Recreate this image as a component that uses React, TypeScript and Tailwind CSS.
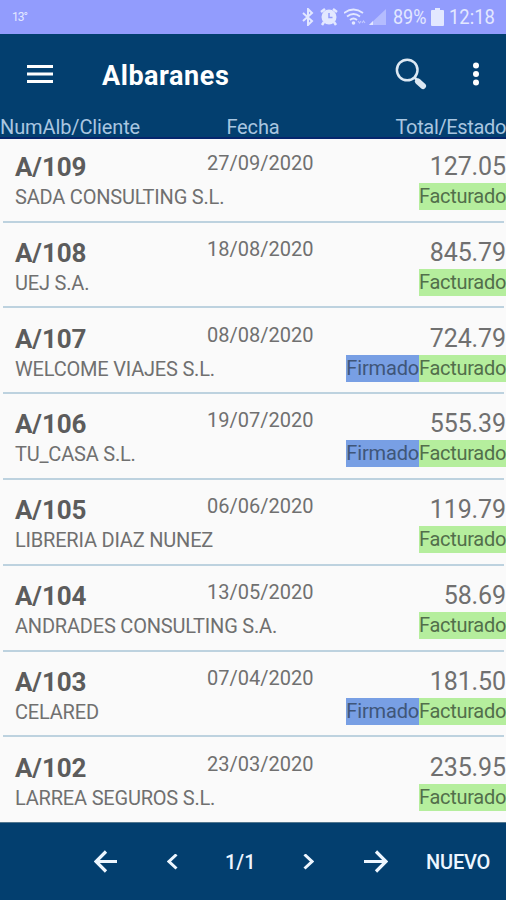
type Row = { num: string; client: string; date: string; total: string; signed?: boolean };

const rows: Row[] = [
  { num: 'A/109', client: 'SADA CONSULTING S.L.', date: '27/09/2020', total: '127.05' },
  { num: 'A/108', client: 'UEJ S.A.', date: '18/08/2020', total: '845.79' },
  { num: 'A/107', client: 'WELCOME VIAJES S.L.', date: '08/08/2020', total: '724.79', signed: true },
  { num: 'A/106', client: 'TU_CASA S.L.', date: '19/07/2020', total: '555.39', signed: true },
  { num: 'A/105', client: 'LIBRERIA DIAZ NUNEZ', date: '06/06/2020', total: '119.79' },
  { num: 'A/104', client: 'ANDRADES CONSULTING S.A.', date: '13/05/2020', total: '58.69' },
  { num: 'A/103', client: 'CELARED', date: '07/04/2020', total: '181.50', signed: true },
  { num: 'A/102', client: 'LARREA SEGUROS S.L.', date: '23/03/2020', total: '235.95' },
];

function StatusBar() {
  return (
    <div className="flex h-[34px] shrink-0 items-center bg-[#929cfd] pr-[11px] pl-3 text-[#e3e8ff]">
      <span className="text-[12px] tracking-[-1px]">13°</span>
      <svg className="ml-auto h-[18px] w-3" viewBox="0 0 12 18" fill="none" stroke="currentColor" strokeWidth="2">
        <path d="M1 5l9 8-4 4V1l4 4-9 8" />
      </svg>
      <svg className="ml-1.5 h-[18px] w-[18px]" viewBox="0 0 18 18">
        <path d="M1 4l4-3M13 1l4 3M4 14l-2 3M14 14l2 3" stroke="currentColor" strokeWidth="2.500" />
        <circle cx="9" cy="9" r="7.5" fill="currentColor" />
        <path d="M9 5v4.500h3.500" fill="none" stroke="#929cfd" strokeWidth="1.500" />
      </svg>
      <svg className="ml-1.5 h-[18px] w-[22px]" viewBox="0 0 22 18" fill="none" stroke="currentColor" strokeWidth="1.8">
        <path d="M0 5q9.500-7 19 0M3 8.500q6.500-5 13 0M6 12q3.500-3 7 0" />
        <circle cx="9.500" cy="15" r="1.800" fill="currentColor" stroke="none" />
        <path d="M14 13l1.500 2 1.500-2M18 15l1.500-2 1.500 2" strokeWidth="1.200" opacity=".6" />
      </svg>
      <svg className="ml-0.5 h-[18px] w-[18px]" viewBox="0 0 18 18">
        <path d="M18 1v16H1z" fill="#b4bcff" />
        <path d="M5 13v4H1z" fill="#e3e8ff" />
      </svg>
      <span className="ml-[7px] w-[35px] origin-left scale-x-[.9] text-[20px] leading-none">89%</span>
      <svg className="ml-[3px] h-[18px] w-[13px]" viewBox="0 0 13 18" fill="currentColor">
        <path d="M4 0h5v2h3q1 0 1 1v14q0 1-1 1H1q-1 0-1-1V3q0-1 1-1h3z" />
      </svg>
      <span className="ml-[5px] w-[46px] origin-left scale-x-[.92] text-[20px] leading-none">12:18</span>
    </div>
  );
}

function Header() {
  return (
    <header className="h-[105px] shrink-0 border-b-2 border-[#06266d] bg-[#033f6f]">
      <div className="flex h-[81px] items-center pl-[27px] text-white">
        <svg className="h-5 w-[26px]" viewBox="0 0 26 20" stroke="currentColor" strokeWidth="3">
          <path d="M0 1.500h26M0 9h26M0 16.500h26" />
        </svg>
        <h1 className="mt-[3px] ml-[49px] text-[27px] font-bold tracking-[0.55px]">Albaranes</h1>
        <svg className="-mt-[2px] ml-auto h-8 w-8" viewBox="0 0 32 32" fill="none" stroke="#dce8f3">
          <circle cx="12.200" cy="12" r="10.300" strokeWidth="2.500" />
          <path d="M19 19l4 4" strokeWidth="2.500" />
          <path d="M23 23.500l5 4.500" strokeWidth="6" strokeLinecap="round" />
        </svg>
        <svg className="-mt-[2px] mr-[26px] ml-[45px] h-6 w-2" viewBox="0 0 8 24" fill="currentColor">
          <circle cx="4" cy="3.500" r="3" /><circle cx="4" cy="12" r="3" /><circle cx="4" cy="20.500" r="3" />
        </svg>
      </div>
      <div className="grid grid-cols-3 text-[20px] leading-6 tracking-[-0.12px] text-[#a9c6e0]">
        <span>NumAlb/Cliente</span>
        <span className="text-center">Fecha</span>
        <span className="text-right tracking-[-0.35px]">Total/Estado</span>
      </div>
    </header>
  );
}

function DeliveryRow({ row }: { row: Row }) {
  return (
    <li className="group h-[85.83px] pt-[13px]">
      <div className="grid h-[69.500px] grid-cols-[200px_1fr_182px] grid-rows-[32px_27px] content-start text-[#707070]">
        <div className="col-span-2 grid grid-cols-[192px_1fr] pl-[15px]">
          <span className="pt-px text-[26px] leading-[30px] font-bold tracking-[-0.1px] text-[#5c5c5c]">{row.num}</span>
          <span className="text-[20px] leading-6">{row.date}</span>
        </div>
        <span className="pt-px text-right text-[25px] leading-[30px] tracking-[-0.1px]">{row.total}</span>
        <span className="col-span-2 pl-[15px] text-[20px] leading-[28px] tracking-[-0.2px] whitespace-nowrap">{row.client}</span>
        <div className="flex items-start justify-end text-[20px] leading-[27px] tracking-[-0.3px]">
          {row.signed && <span className="bg-[#789fe4] text-[#3f5679] tracking-[-0.15px]">Firmado</span>}
          <span className="bg-[#b5ee9d] text-[#526e4b]">Facturado</span>
        </div>
      </div>
      <div className="mr-[2px] ml-[3px] h-[2px] bg-[#bdd2df] group-last:hidden" />
    </li>
  );
}

function Footer() {
  return (
    <footer className="flex h-[78px] shrink-0 items-center border-t border-[#53778f] bg-[#033f6f] pl-[94px] text-[20px] font-medium text-[#edf6ff]">
      <svg className="h-6 w-6" viewBox="0 0 24 24" fill="none" stroke="currentColor" strokeWidth="3.200">
        <path d="M23 11.500H2M12 1.500l-10 10 10 10" />
      </svg>
      <svg className="ml-[49px] h-4 w-[11px]" viewBox="0 0 11 16" fill="none" stroke="currentColor" strokeWidth="3">
        <path d="M9.500 .5L2 7.500l7.500 7" />
      </svg>
      <span className="ml-[47px] w-[30px]">1/1</span>
      <svg className="ml-[48px] h-4 w-[11px]" viewBox="0 0 11 16" fill="none" stroke="currentColor" strokeWidth="3">
        <path d="M1.500 .5L9 7.500l-7.500 7" />
      </svg>
      <svg className="ml-[50px] h-6 w-6" viewBox="0 0 24 24" fill="none" stroke="currentColor" strokeWidth="3.200">
        <path d="M0 11.500h22M12 1.500l10 10-10 10" />
      </svg>
      <span className="ml-[38px] tracking-[-0.2px]">NUEVO</span>
    </footer>
  );
}

export default function App() {
  return (
    <div className="flex h-[900px] w-[506px] flex-col overflow-hidden bg-[#fafafa] font-[Roboto,sans-serif]">
      <StatusBar />
      <Header />
      <main className="h-[683px] shrink-0 overflow-hidden">
        <ul className="-mt-px">
          {rows.map((row) => <DeliveryRow key={row.num} row={row} />)}
        </ul>
      </main>
      <Footer />
    </div>
  );
}
